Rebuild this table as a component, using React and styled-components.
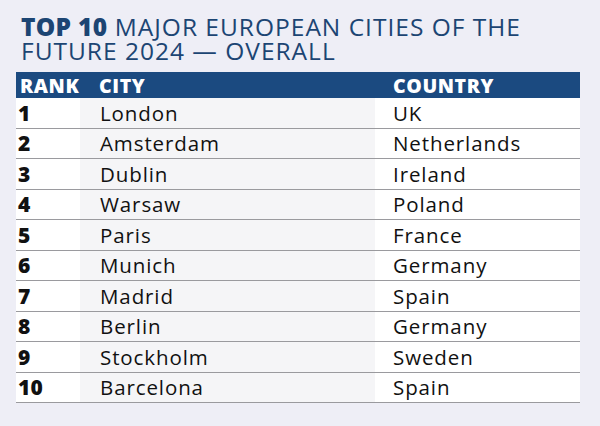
import React from "react";
import styled, { createGlobalStyle } from "styled-components";

const GlobalStyle = createGlobalStyle`
  html, body { margin: 0; padding: 0; background: #eeeef6; }
  body { font-family: "Open Sans", "Liberation Sans", sans-serif; }
`;

const Page = styled.div`
  width: 600px;
  height: 426px;
  box-sizing: border-box;
  padding: 15px 20px 0 16px;
  background: #eeeef6;
`;

const Title = styled.h1`
  margin: 0 0 9px 5px;
  font-size: 24.5px;
  line-height: 24px;
  font-weight: 400;
  color: #1c4573;
  letter-spacing: 1px;
  white-space: nowrap;
`;

const Strong = styled.span`
  font-weight: 800;
  letter-spacing: 0.3px;
`;

const Table = styled.div`
  display: grid;
  grid-template-columns: 64px 295px 205px;
  width: 564px;
`;

const HeadCell = styled.div`
  background: #1b4a80;
  color: #ffffff;
  height: 26px;
  display: flex;
  align-items: center;
  padding-left: ${(p) => p.$pad}px;
  font-size: 19.5px;
  font-weight: 800;
  letter-spacing: 0.6px;
`;

const Cell = styled.div`
  height: 30.5px;
  box-sizing: border-box;
  border-bottom: 1.5px solid #9a9a9e;
  display: flex;
  align-items: center;
  padding-left: ${(p) => p.$pad}px;
  background: ${(p) => p.$bg};
  color: #111;
  font-size: ${(p) => (p.$bold ? 21 : 20.5)}px;
  font-weight: ${(p) => (p.$bold ? 800 : 400)};
  letter-spacing: ${(p) => (p.$bold ? 0.3 : 0.9)}px;
`;

const rows = [
  ["1", "London", "UK"],
  ["2", "Amsterdam", "Netherlands"],
  ["3", "Dublin", "Ireland"],
  ["4", "Warsaw", "Poland"],
  ["5", "Paris", "France"],
  ["6", "Munich", "Germany"],
  ["7", "Madrid", "Spain"],
  ["8", "Berlin", "Germany"],
  ["9", "Stockholm", "Sweden"],
  ["10", "Barcelona", "Spain"],
];

export default function App() {
  return (
    <Page>
      <GlobalStyle />
      <Title>
        <Strong>TOP 10</Strong> MAJOR EUROPEAN CITIES OF THE
        <br />
        FUTURE 2024 — OVERALL
      </Title>
      <Table>
        <HeadCell $pad={4}>RANK</HeadCell>
        <HeadCell $pad={19}>CITY</HeadCell>
        <HeadCell $pad={18}>COUNTRY</HeadCell>
        {rows.map(([rank, city, country]) => (
          <React.Fragment key={rank}>
            <Cell $pad={2} $bg="#ffffff" $bold>{rank}</Cell>
            <Cell $pad={20} $bg="#f5f5f7">{city}</Cell>
            <Cell $pad={18} $bg="#ffffff">{country}</Cell>
          </React.Fragment>
        ))}
      </Table>
    </Page>
  );
}
